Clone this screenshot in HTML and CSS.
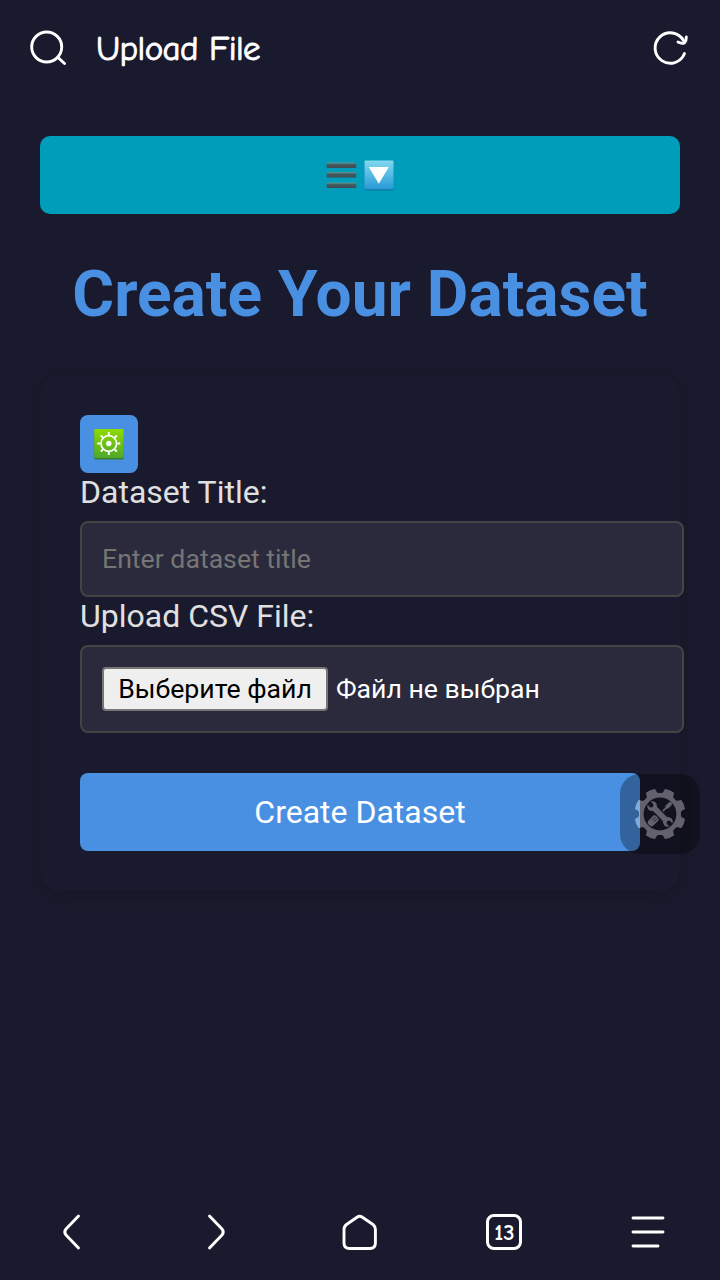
FILE: index.html
```html
<!DOCTYPE html>
<html lang="en">
<head>
<meta charset="utf-8">
<title>Upload File</title>
<link rel="stylesheet" href="styles.css">
</head>
<body>
<div class="screen">
  <header class="topbar">
    <svg class="icon" width="40" height="40" viewBox="0 0 40 40"><circle cx="18.700" cy="19" r="15"/><path d="M30 29.500L36.500 35.500"/></svg>
    <span class="page-name">Upload File</span>
    <svg class="icon" width="40" height="40" viewBox="0 0 40 40"><path d="M34.500 25.500A15.200 15.200 0 1 1 33.500 12.500"/><path d="M28 14Q31.500 16 34.500 14.800Q36.500 12.500 36.300 9"/></svg>
  </header>
  <main class="content">
    <button class="menu-toggle" aria-label="Menu">
      <svg width="68" height="32" viewBox="0 0 68 32">
        <defs>
          <linearGradient id="bar" x1="0" y1="0" x2="0" y2="1"><stop offset="0" stop-color="#5f9a9c"/><stop offset=".4" stop-color="#415b60"/><stop offset="1" stop-color="#424c51"/></linearGradient>
          <linearGradient id="sky" x1="0" y1="0" x2="0" y2="1"><stop offset="0" stop-color="#83d9ef"/><stop offset="1" stop-color="#289bd7"/></linearGradient>
        </defs>
        <g fill="url(#bar)"><rect x=".7" y="3.500" width="29.500" height="5.500"/><rect x=".7" y="13" width="29.500" height="5.500"/><rect x=".7" y="23.500" width="29.500" height="5.500"/></g>
        <rect x="38.500" y="2.500" width="29" height="29" rx="1" fill="#147faa"/><rect x="38.500" y="1.500" width="29" height="28.500" rx="1" fill="url(#sky)"/>
        <path d="M42.800 8H62.800L52.800 24.800Z" fill="#fff"/>
      </svg>
    </button>
    <h1 class="title">Create Your Dataset</h1>
    <form class="card">
      <button class="gear-button" type="button" aria-label="Settings">
        <svg width="30" height="32" viewBox="0 0 30 32">
          <defs><linearGradient id="leaf" x1="0" y1="0" x2="0" y2="1"><stop offset="0" stop-color="#8edb00"/><stop offset="1" stop-color="#4fa82c"/></linearGradient></defs>
          <rect x=".3" y="2" width="29.400" height="29.500" rx="1" fill="#397d27"/><rect x=".3" y="1" width="29.400" height="29" rx="1" fill="url(#leaf)"/>
          <g fill="none" stroke="#fff"><circle cx="14.800" cy="15.500" r="7.800" stroke-width="1.700"/><path stroke-width="1.900" d="M14.800 7V4M14.800 24V27M6.300 15.500H3.300M23.300 15.500H26.300M9 9.700L6.800 7.500M20.600 9.700L22.800 7.500M9 21.300L6.800 23.500M20.600 21.300L22.800 23.500"/></g>
          <circle cx="14.800" cy="15.500" r="2.700" fill="#fff"/>
        </svg>
      </button>
      <label class="label" for="title">Dataset Title:</label>
      <input class="field" id="title" type="text" placeholder="Enter dataset title">
      <label class="label">Upload CSV File:</label>
      <div class="field file-field"><span class="file-button">Выберите файл</span><span class="file-name">Файл не выбран</span></div>
      <button class="submit" type="button">Create Dataset</button>
    </form>
  </main>
  <nav class="bottombar">
    <span class="nav-item"><svg class="icon" width="40" height="40" viewBox="0 0 40 40"><path d="M26.500 4L14 17Q11.500 20 14 23L26.500 36"/></svg></span>
    <span class="nav-item"><svg class="icon" width="40" height="40" viewBox="0 0 40 40"><path d="M13.500 4L26 17Q28.500 20 26 23L13.500 36"/></svg></span>
    <span class="nav-item"><svg class="icon" width="40" height="40" viewBox="0 0 40 40"><path d="M17 5.200Q19.700 3.400 22.400 5.200L33 12.500Q35.400 14.400 35.400 17.500V31Q35.400 36.500 30 36.500H9.500Q4 36.500 4 31V17.500Q4 14.400 6.500 12.500Z"/></svg></span>
    <span class="nav-item"><span class="tab-count">13</span></span>
    <span class="nav-item"><svg class="icon" width="40" height="40" viewBox="0 0 40 40"><path d="M5 6H35M5 20H35M5 34H30"/></svg></span>
  </nav>
  <div class="tool-float">
    <svg width="52" height="52" viewBox="-26 -26 52 52">
      <defs>
        <path id="tooth" d="M-8 -18.500L-5.500 -21L-5 -25Q0 -26.500 5 -25L5.500 -21L8 -18.500Z"/>
        <g id="gear"><circle r="18.700" fill="none" stroke="currentColor" stroke-width="4.600"/><g transform="rotate(22.500)" fill="currentColor"><use href="#tooth"/><use href="#tooth" transform="rotate(45)"/><use href="#tooth" transform="rotate(90)"/><use href="#tooth" transform="rotate(135)"/><use href="#tooth" transform="rotate(180)"/><use href="#tooth" transform="rotate(225)"/><use href="#tooth" transform="rotate(270)"/><use href="#tooth" transform="rotate(315)"/></g></g>
        <clipPath id="edge"><rect x="-26" y="-26" width="6" height="52"/></clipPath>
      </defs>
      <use href="#gear" color="#62616d"/>
      <g clip-path="url(#edge)"><use href="#gear" color="#7eabdc"/></g>
      <g fill="#62616d">
        <g transform="rotate(45)"><path d="M-.8 -4V-8L-2 -10V-14L-1.500 -16H1.500L2 -14V-10L.8 -8V-4Z"/><path d="M-3.500 5Q0 3 3.500 5V13Q3.500 15.500 0 15.500Q-3.500 15.500 -3.500 13Z"/><path d="M-1 5V10M1.300 5V10" stroke="#12121d" stroke-width=".7"/></g>
        <path transform="rotate(-45)" d="M-2.800 -7Q-5 -8.500 -5 -11.500Q-4.800 -14 -2.200 -15.500V-11.500L0 -10L2.200 -11.500V-15.500Q4.800 -14 5 -11.500Q5 -8.500 2.800 -7V7Q5 8.500 5 11.500Q4.800 14 2.200 15.500V11.500L0 10L-2.200 11.500V15.500Q-4.800 14 -5 11.500Q-5 8.500 -2.800 7Z"/>
      </g>
    </svg>
  </div>
</div>
</body>
</html>
```
FILE: styles.css
```css
* { box-sizing: border-box; }
body { margin: 0; background: #1a1a2e; font-family: Roboto, sans-serif; }
button { border: 0; padding: 0; font-family: inherit; }
svg { display: block; flex: none; }
.screen { position: relative; width: 720px; height: 1280px; display: flex; flex-direction: column; overflow: hidden; }
.icon { fill: none; stroke: #fff; stroke-width: 2.9; stroke-linecap: round; stroke-linejoin: round; }
.topbar { height: 96px; padding: 0 30px 0 28px; display: flex; align-items: center; }
.page-name { flex: 1; margin-left: 28px; color: #fff; font-family: "Comic Neue", "Comic Sans MS", Lato, sans-serif; font-size: 35px; letter-spacing: -0.6px; line-height: 40px; padding-top: 2px; -webkit-text-stroke: 0.9px #fff; }
.content { flex: 1; padding: 40px 40px 0; }
.menu-toggle { width: 100%; height: 78px; border-radius: 10px; background: #009dbb; display: flex; align-items: center; justify-content: center; }
.title { margin: 40px -20px; height: 81px; line-height: 81px; font-size: 64px; font-weight: 700; text-align: center; color: #4a90e2; white-space: nowrap; }
.card { height: 516px; padding: 40px; border-radius: 20px; background: #1a1a2e; box-shadow: 0 4px 20px rgba(0, 0, 0, 0.2); display: flex; flex-direction: column; align-items: flex-start; }
.gear-button { width: 58px; height: 58px; border-radius: 8px; background: #4a90e2; display: flex; align-items: center; justify-content: center; }
.label { height: 38px; line-height: 38px; font-size: 32px; color: #e0e0e0; }
.field { width: 604px; height: 76px; margin-top: 10px; padding: 20px; border: 2px solid #444; border-radius: 8px; background: #2a2a3c; color: #fff; font-family: inherit; font-size: 26.67px; }
.field::placeholder { color: #757575; opacity: 1; }
.file-field { height: 88px; display: flex; align-items: center; gap: 8px; white-space: nowrap; }
.file-button { width: 226px; height: 44px; line-height: 40px; border: 2px solid #767676; border-radius: 4px; background: #efefef; color: #000; text-align: center; }
.submit { width: 560px; height: 78px; margin-top: 40px; border-radius: 8px; background: #4a90e2; color: #fff; font-size: 32px; }
.bottombar { height: 96px; display: flex; align-items: center; }
.nav-item { flex: 1; display: flex; justify-content: center; }
.tab-count { width: 36px; height: 36px; border: 3px solid #fff; border-radius: 8px; color: #fff; font-family: "Comic Neue", "Comic Sans MS", Lato, sans-serif; font-size: 23px; font-weight: 700; line-height: 31px; text-align: center; text-indent: 1px; }
.tool-float { position: absolute; left: 620px; top: 774px; width: 80px; height: 80px; border-radius: 20px; background: rgba(0, 0, 0, 0.31); display: flex; align-items: center; justify-content: center; }
```
